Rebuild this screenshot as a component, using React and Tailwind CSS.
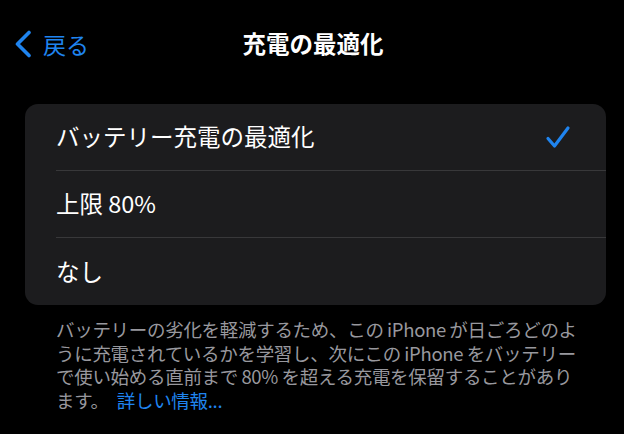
const font = { fontFamily: '"Noto Sans CJK JP", "Noto Sans", sans-serif' };

const options = [
  { label: 'バッテリー充電の最適化', checked: true },
  { label: '上限 80%', checked: false },
  { label: 'なし', checked: false },
];

const footerLines = [
  'バッテリーの劣化を軽減するため、この iPhone が日ごろどのよ',
  'うに充電されているかを学習し、次にこの iPhone をバッテリー',
  'で使い始める直前まで 80% を超える充電を保留することがあり',
];

export default function App() {
  return (
    <div className="w-[624px] h-[434px] bg-black text-white overflow-hidden" style={font}>
      {/* nav bar */}
      <div className="relative h-[90px] flex items-center px-[14px]">
        <div className="flex items-center gap-[11px] text-[#1f84ef] -mt-[2px]">
          <svg width="18" height="28" viewBox="0 0 18 28" fill="none">
            <path d="M15 2.5 L3.5 14 L15 25.5" stroke="currentColor" strokeWidth="3.6" strokeLinecap="round" strokeLinejoin="round" />
          </svg>
          <span className="text-[23px] leading-none">戻る</span>
        </div>
        <div className="absolute left-0 right-0 top-0 h-[90px] flex items-center justify-center pointer-events-none">
          <span className="text-[23.5px] font-bold leading-none -mt-[2px] pl-[2px]">充電の最適化</span>
        </div>
      </div>

      {/* options card */}
      <div className="mx-[25px] mt-[14px] w-[581px] rounded-[13px] bg-[#1c1c1e]">
        {options.map((o, i) => (
          <div key={o.label} className="pl-[31px]">
            <div className={`h-[67px] flex items-center justify-between pr-[35px] ${i < options.length - 1 ? 'border-b border-[#38383a]' : ''}`}>
              <span className="text-[23.5px] leading-none whitespace-pre">{o.label}</span>
              {o.checked && (
                <svg width="26" height="24" viewBox="0 0 26 24" fill="none">
                  <path d="M3 13.5 L9.5 21 L23 3" stroke="#1f84ef" strokeWidth="3.2" strokeLinecap="round" strokeLinejoin="round" />
                </svg>
              )}
            </div>
          </div>
        ))}
      </div>

      {/* footer */}
      <div className="mx-[56px] mt-[13px] text-[18.5px] leading-[23.5px] text-[#98989e] tracking-[-0.3px]">
        {footerLines.map((l) => (
          <div key={l} className="whitespace-nowrap">{l.replace(/ /g, '\u2009')}</div>
        ))}
        <div className="whitespace-nowrap">
          ます。
          <span className="text-[#1f84ef] ml-[8px]">詳しい情報...</span>
        </div>
      </div>
    </div>
  );
}
